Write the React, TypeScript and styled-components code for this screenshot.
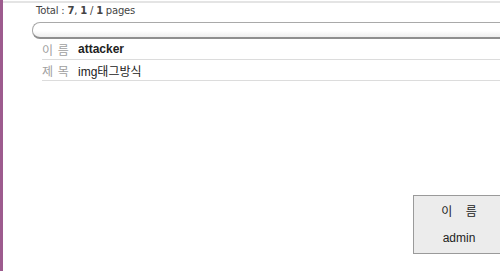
import * as React from 'react';
import styled, { createGlobalStyle } from 'styled-components';

const GlobalStyle = createGlobalStyle`
  html, body {
    margin: 0;
    padding: 0;
    background: #fff;
    overflow: hidden;
  }
  body {
    font-family: "Liberation Sans", "Noto Sans CJK KR", sans-serif;
    color: #333;
  }
`;

const StyledFrame = styled.div`
  width: 500px;
  height: 271px;
  box-sizing: border-box;
  border-left: 3px solid #9d5b8e;
  display: flex;
  flex-direction: column;
`;

const StyledTopRule = styled.div`
  height: 2px;
  margin-top: 1px;
  background: #e4e4e4;
`;

const StyledContent = styled.div`
  padding-left: 29px;
  display: flex;
  flex-direction: column;
`;

const StyledTotal = styled.div`
  font-family: Tahoma, "DejaVu Sans", "Liberation Sans", sans-serif;
  font-size: 10px;
  letter-spacing: -0.2px;
  color: #444;
  height: 14px;
  line-height: 14px;
  margin: 1px 0 0 4px;
`;

const StyledBar = styled.div`
  margin-top: 4px;
  height: 14px;
  border: 1px solid #a9a9a9;
  border-right: none;
  border-bottom: 2px solid #8f8f8f;
  border-radius: 8px 0 0 8px;
  background: linear-gradient(#ffffff 0%, #ffffff 55%, #eeeeee 100%);
`;

const StyledTable = styled.div`
  margin-left: 10px;
  display: flex;
  flex-direction: column;
`;

const StyledRow = styled.div`
  display: flex;
  align-items: center;
  height: 20px;
  border-bottom: 1px solid #dcdcdc;
  font-size: 12px;
`;

const StyledLabel = styled.span`
  width: 36px;
  color: #a0a0a0;
  font-family: "Noto Sans CJK KR", sans-serif;
  font-size: 12px;
  letter-spacing: 1px;
  white-space: pre;
`;

const StyledValue = styled.span<{ $bold?: boolean }>`
  font-weight: ${(p) => (p.$bold ? 700 : 400)};
  color: #222;
  font-family: "Liberation Sans", "Noto Sans CJK KR", sans-serif;
  font-size: 12px;
`;

const StyledBoxRow = styled.div`
  margin-top: 114px;
  display: flex;
  justify-content: flex-end;
`;

const StyledNameBox = styled.div`
  width: 87px;
  height: 59px;
  box-sizing: border-box;
  background: #ececec;
  border: 1px solid #9a9a9a;
  border-right: none;
  display: flex;
  flex-direction: column;
  padding: 1px 0 1px 4px;
  font-size: 12px;
  color: #222;
`;

const StyledBoxCell = styled.div`
  flex: 1;
  display: flex;
  align-items: center;
  justify-content: center;
  font-family: "Liberation Sans", "Noto Sans CJK KR", sans-serif;
  white-space: pre;
`;

export default function App() {
  return (
    <>
      <GlobalStyle />
      <StyledFrame>
        <StyledTopRule />
        <StyledContent>
          <StyledTotal>
            Total : <b>7</b>, <b>1</b> / <b>1</b> pages
          </StyledTotal>
          <StyledBar />
          <StyledTable>
            <StyledRow>
              <StyledLabel>{'이 름'}</StyledLabel>
              <StyledValue $bold>attacker</StyledValue>
            </StyledRow>
            <StyledRow>
              <StyledLabel>{'제 목'}</StyledLabel>
              <StyledValue>img태그방식</StyledValue>
            </StyledRow>
          </StyledTable>
        </StyledContent>
        <StyledBoxRow>
          <StyledNameBox>
            <StyledBoxCell>{'이    름'}</StyledBoxCell>
            <StyledBoxCell>admin</StyledBoxCell>
          </StyledNameBox>
        </StyledBoxRow>
      </StyledFrame>
    </>
  );
}
